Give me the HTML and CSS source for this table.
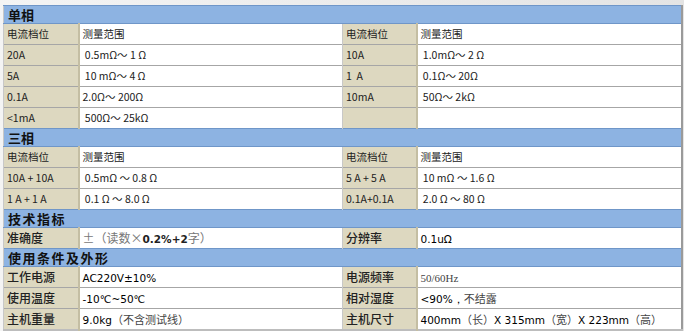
FILE: index.html
```html
<!DOCTYPE html>
<html>
<head>
<meta charset="utf-8">
<link rel="stylesheet" href="styles.css">
</head>
<body>
<div class="page">
<table class="spec">
<colgroup><col class="c1"><col class="c2"><col class="c3"><col class="c4"></colgroup>
<tr class="hd"><td colspan="4">单相</td></tr>
<tr><td class="lb">电流档位</td><td>测量范围</td><td class="lb">电流档位</td><td>测量范围</td></tr>
<tr><td class="lb">20A</td><td>&nbsp;0.5mΩ～ 1 Ω</td><td class="lb">10A</td><td>&nbsp;1.0mΩ～ 2 Ω</td></tr>
<tr><td class="lb">5A</td><td>&nbsp;10 mΩ～ 4 Ω</td><td class="lb">1&nbsp; A</td><td>&nbsp;0.1Ω～ 20Ω</td></tr>
<tr><td class="lb">0.1A</td><td>2.0Ω～ 200Ω</td><td class="lb">10mA</td><td>&nbsp;50Ω～ 2kΩ</td></tr>
<tr><td class="lb">&lt;1mA</td><td>&nbsp;500Ω～ 25kΩ</td><td class="lb"></td><td></td></tr>
<tr class="hd"><td colspan="4">三相</td></tr>
<tr><td class="lb">电流档位</td><td>测量范围</td><td class="lb">电流档位</td><td>测量范围</td></tr>
<tr><td class="lb">10A + 10A</td><td>&nbsp;0.5mΩ ～ 0.8 Ω</td><td class="lb">5 A + 5 A</td><td>&nbsp;10 mΩ ～ 1.6 Ω</td></tr>
<tr><td class="lb">1 A + 1 A</td><td>&nbsp;0.1 Ω ～ 8.0 Ω</td><td class="lb">0.1A+0.1A</td><td>&nbsp;2.0 Ω ～ 80 Ω</td></tr>
<tr class="hd"><td colspan="4" class="sp">技术指标</td></tr>
<tr class="big"><td class="lb">准确度</td><td><span class="lt">±（读数×</span><b>0.2%+2</b><span class="lt">字）</span></td><td class="lb">分辨率</td><td><span class="v">0.1uΩ</span></td></tr>
<tr class="hd"><td colspan="4" class="sp">使用条件及外形</td></tr>
<tr class="big"><td class="lb">工作电源</td><td><span class="v">AC220V±10%</span></td><td class="lb">电源频率</td><td><span class="sf">50/60Hz</span></td></tr>
<tr class="big"><td class="lb">使用温度</td><td><span class="v">-10℃~50℃</span></td><td class="lb">相对湿度</td><td><span class="v">&lt;90%，</span><span class="sf">不结露</span></td></tr>
<tr class="big"><td class="lb">主机重量</td><td><span class="v">9.0kg</span><span class="sf">（不含测试线）</span></td><td class="lb">主机尺寸</td><td><span class="v">400mm</span><span class="sf">（长）</span><span class="v">X 315mm</span><span class="sf">（宽）</span><span class="v">X 223mm</span><span class="sf">（高）</span></td></tr>
</table>
</div>
</body>
</html>
```
FILE: styles.css
```css
html, body {
  margin: 0;
  padding: 0;
}
body {
  width: 684px;
  height: 331px;
  background: linear-gradient(90deg, #f4f4f4 0%, #ececec 50%, #e4e4e4 100%);
  font-family: "Noto Sans CJK SC", "Open Sans", sans-serif;
  overflow: hidden;
}
.page {
  padding: 5px 0 0 3px;
}
.spec {
  border-collapse: collapse;
  table-layout: fixed;
  width: 678px;
  background: #fff;
  border-right: 2px solid #9a9a9a;
  border-bottom: 2px solid #bdbdbd;
}
.c1 { width: 75px; }
.c2 { width: 264px; }
.c3 { width: 74px; }
.c4 { width: 265px; }
.spec td {
  height: 20px;
  padding: 0 0 0 3px;
  border-top: 1px solid #a6a6a6;
  border-left: 1px solid #c8c8c8;
  font-size: 10.5px;
  line-height: 14px;
  color: #222;
  white-space: nowrap;
  overflow: hidden;
  vertical-align: middle;
}
.spec td.lb {
  background: #ddd8c0;
  border-right: 2px solid #c4bea3;
}
.spec tr.hd td {
  background: #8db3e2;
  height: 17px;
  font-weight: bold;
  font-size: 13px;
  color: #111;
  padding-left: 4px;
  border-top: 1px solid #6f96c8;
  border-bottom: 1px solid #6f96c8;
}
.spec tr.hd td.sp {
  letter-spacing: 1.5px;
}
.spec tr.big td {
  font-size: 12px;
}
.spec tr.big td.lb {
  font-weight: 500;
}
.spec b {
  font-family: "DejaVu Sans", sans-serif;
  font-size: 10.5px;
  font-weight: bold;
  color: #222;
}
.v {
  font-family: "DejaVu Sans", sans-serif;
  font-size: 10.5px;
  color: #000;
}
.lt {
  color: #777;
}
.sf {
  font-family: "Liberation Serif", "Noto Sans CJK SC", serif;
  color: #444;
  font-size: 11px;
}
```
